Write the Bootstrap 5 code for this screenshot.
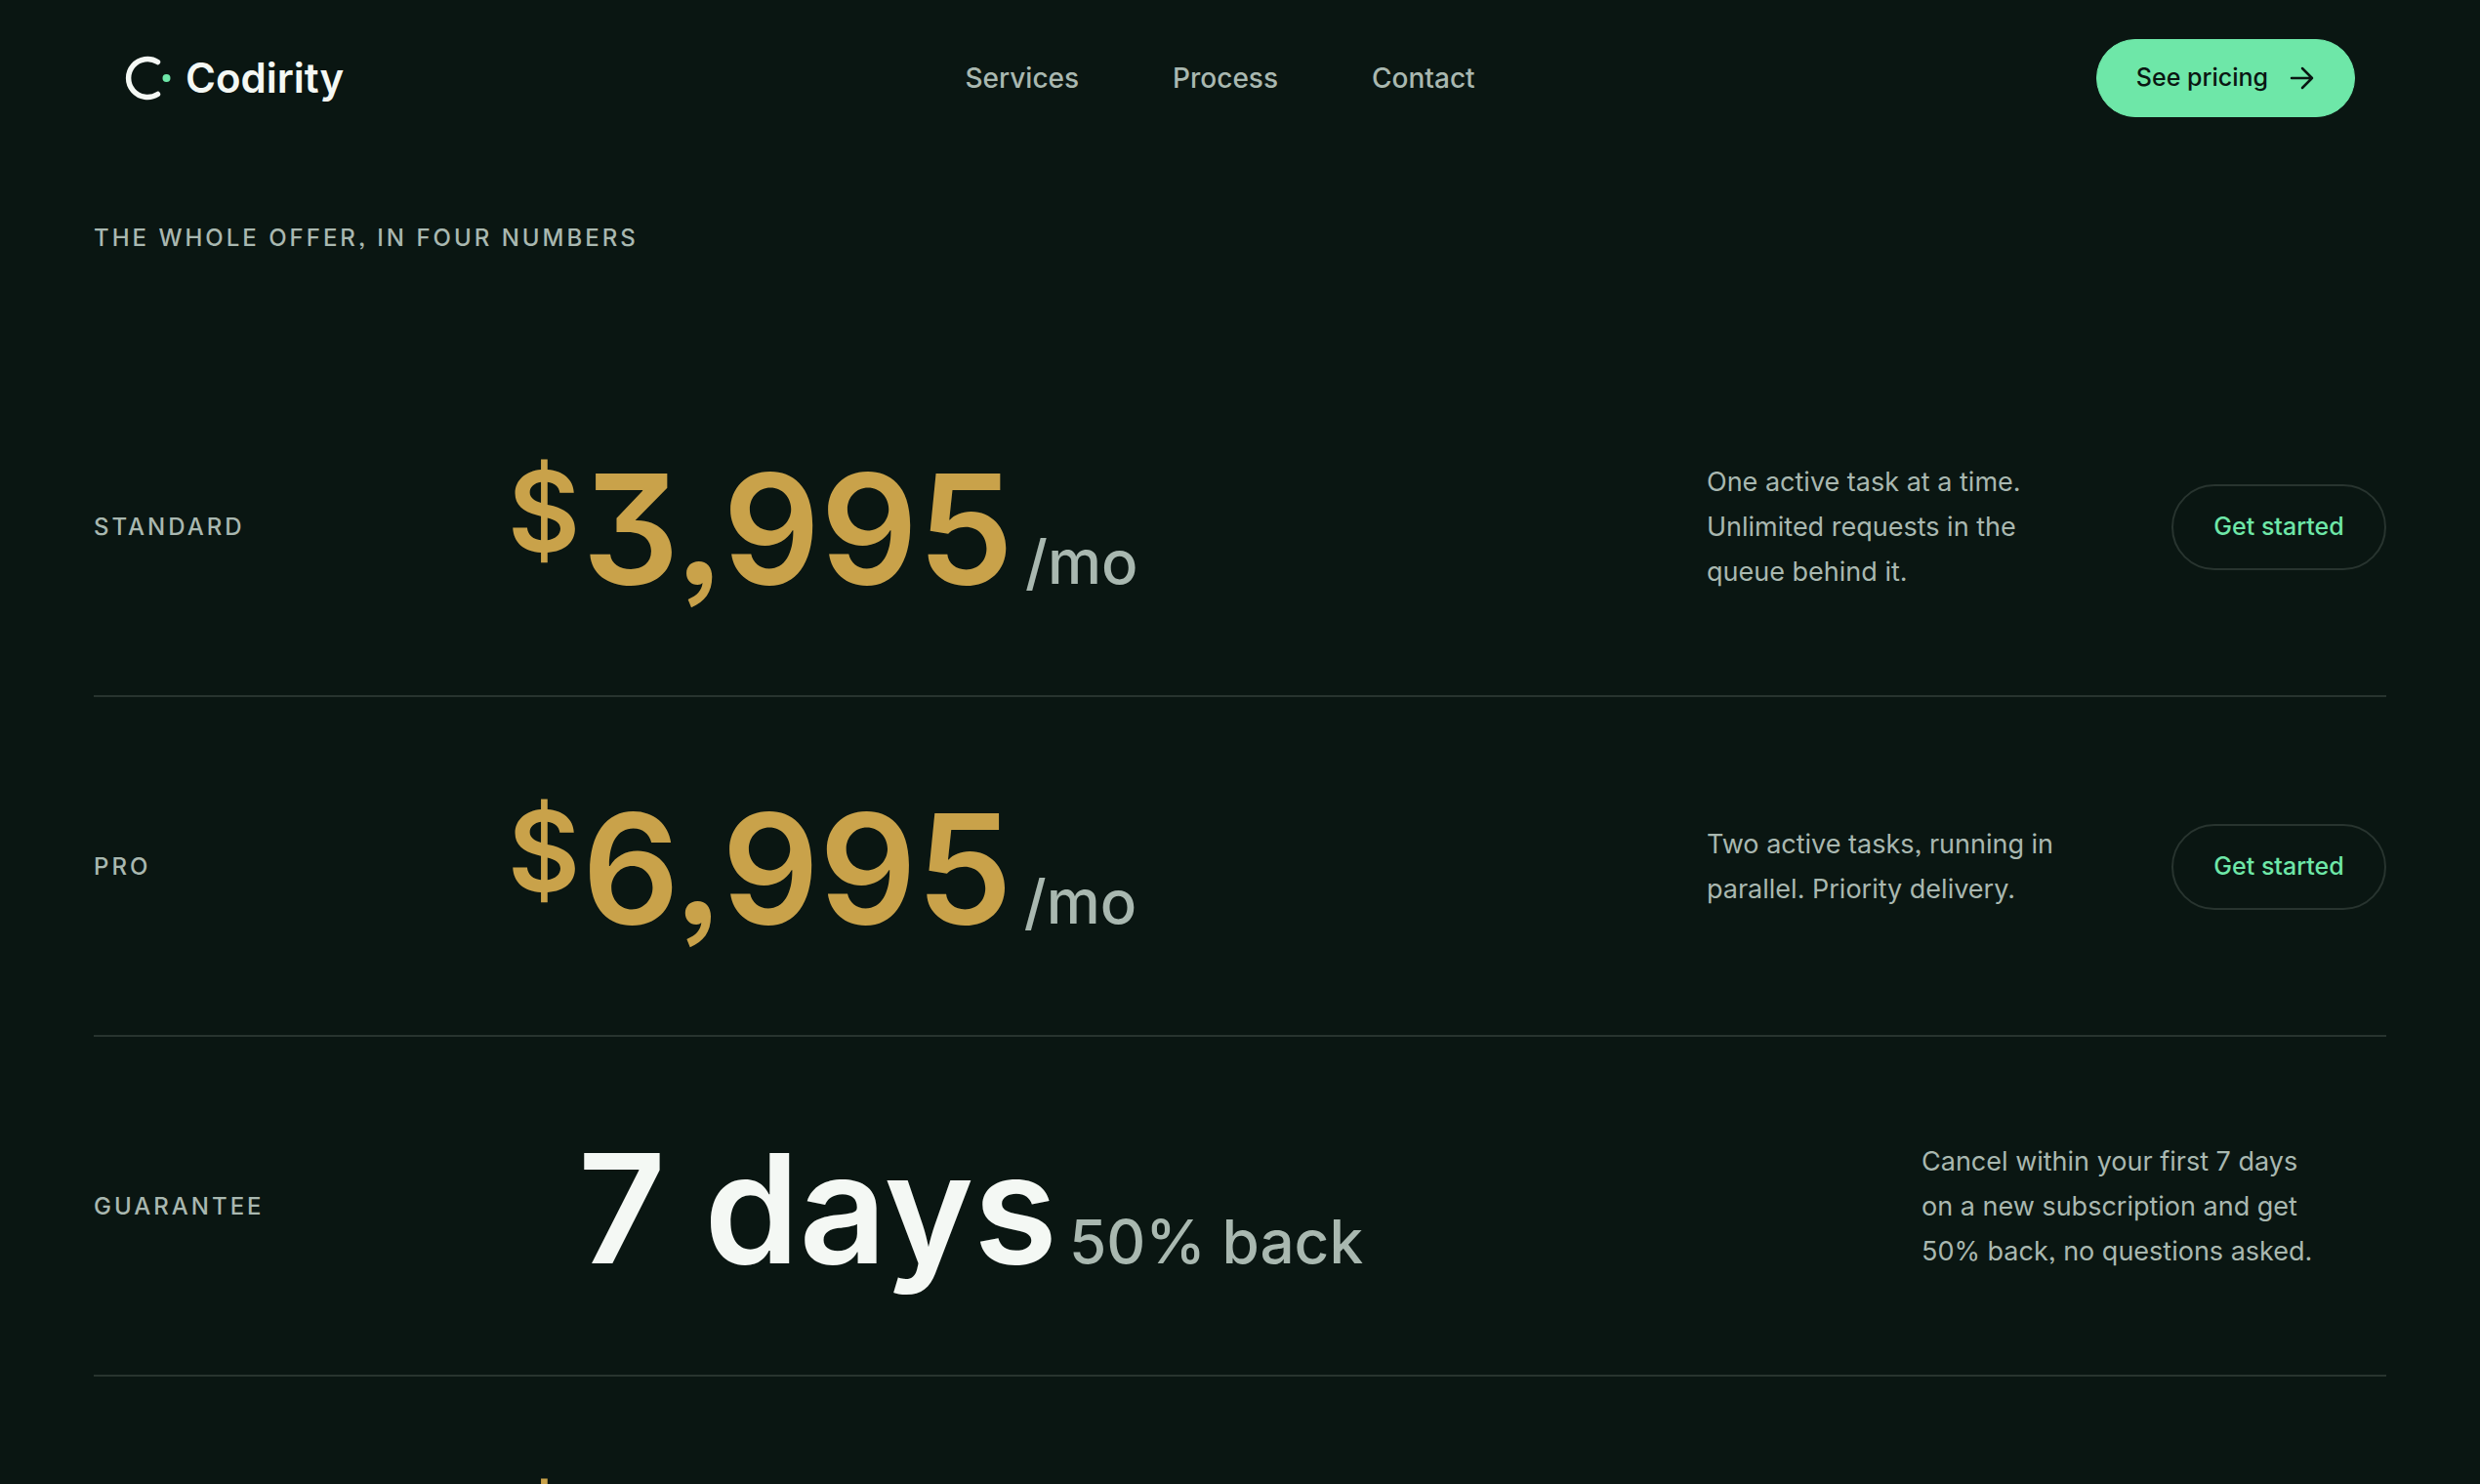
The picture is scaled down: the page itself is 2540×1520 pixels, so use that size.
<!DOCTYPE html>
<html lang="en">
<head>
<meta charset="utf-8">
<meta name="viewport" content="width=device-width, initial-scale=1">
<title>Codirity</title>
<link href="https://cdn.jsdelivr.net/npm/bootstrap@5.3.0/dist/css/bootstrap.min.css" rel="stylesheet">
<style>
:root{--ink:#0a1612;--soft:#a9b8b0;--mint:#6ee7a8;--gold:#c9a24a;--paper:#f4f8f4;--rule:#28342f}
body{background:var(--ink);color:var(--soft);font-family:Inter,"Liberation Sans",sans-serif;font-size:27px;line-height:46px;font-feature-settings:"ss03"}
.site-bar{padding:40px 128px}
.brand-link{color:var(--paper);font-size:42px;font-weight:600;line-height:48px;gap:14px}
.brand-link:hover{color:var(--paper)}
.site-links{gap:96px}
.site-links .nav-link{color:var(--soft);font-size:28px;font-weight:500;line-height:40px}
.btn-mint{--bs-btn-bg:var(--mint);--bs-btn-color:var(--ink);--bs-btn-border-color:var(--mint);--bs-btn-hover-bg:var(--paper);height:80px;padding:0 40px;gap:22px;font-size:25px;font-weight:500}
.offer{padding:0 96px}
.eyebrow{font-size:24px;font-weight:500;line-height:32px;letter-spacing:3px;text-transform:uppercase;margin:0}
.offer-title{padding:68px 0 106px}
.offer-row{height:348px;padding-top:2px;border-bottom:2px solid var(--rule)}
.offer-label{flex:0 0 424px}
.offer-label.wide{flex-basis:496px}
.figure-line{color:var(--gold);font-size:156px;font-weight:600;line-height:162px;height:166px;padding-top:4px}
.figure-line.plain{color:var(--paper)}
.currency{font-size:114px;line-height:126px;margin-right:2px}
.amount{font-feature-settings:"cv09","ss03"}
.unit{color:var(--soft);font-size:62px;font-weight:500;line-height:62px;margin-left:12px}
.offer-note{flex:0 0 364px}
.offer-note.wide{flex-basis:476px}
.offer-action{margin-left:112px}
.btn-ring{--bs-btn-color:var(--mint);--bs-btn-border-color:var(--rule);--bs-btn-border-width:2px;--bs-btn-hover-color:var(--ink);--bs-btn-hover-bg:var(--mint);width:220px;height:88px;font-size:25px;font-weight:500}
</style>
</head>
<body class="vh-100 overflow-hidden">
<header class="site-bar d-flex justify-content-between align-items-center">
  <a href="#" class="brand-link d-flex align-items-center text-decoration-none">
    <svg width="48" height="48" viewBox="0 0 48 48" fill="none" aria-hidden="true"><path d="M34.500 7.500A19.500 19.500 0 1 0 34.500 40.500" stroke="#f4f8f4" stroke-width="5.500" stroke-linecap="round" transform="translate(-1 0)"/><circle cx="42.500" cy="24" r="4" fill="#6ee7a8"/></svg>
    <span>Codirity</span>
  </a>
  <nav class="site-links d-flex" aria-label="Main">
    <a class="nav-link" href="#services">Services</a>
    <a class="nav-link" href="#process">Process</a>
    <a class="nav-link" href="#contact">Contact</a>
  </nav>
  <button type="button" class="btn btn-mint rounded-pill d-flex align-items-center">See pricing
    <svg width="26" height="26" viewBox="0 0 26 26" fill="none" stroke="currentColor" stroke-width="2.500" stroke-linecap="round" stroke-linejoin="round" aria-hidden="true"><path d="M2 13H23M13 3L23 13L13 23"/></svg>
  </button>
</header>
<main class="offer">
  <div class="offer-title"><h1 class="eyebrow">The whole offer, in four numbers</h1></div>
  <section class="offer-row d-flex align-items-center">
    <h2 class="eyebrow offer-label">Standard</h2>
    <div class="figure-line d-flex align-items-baseline flex-grow-1"><span class="currency align-self-start">$</span><span class="amount">3,995</span><span class="unit">/mo</span></div>
    <p class="offer-note mb-0">One active task at a time. Unlimited requests in the queue behind it.</p>
    <div class="offer-action"><button type="button" class="btn btn-ring rounded-pill">Get started</button></div>
  </section>
  <section class="offer-row d-flex align-items-center">
    <h2 class="eyebrow offer-label">Pro</h2>
    <div class="figure-line d-flex align-items-baseline flex-grow-1"><span class="currency align-self-start">$</span><span class="amount">6,995</span><span class="unit">/mo</span></div>
    <p class="offer-note mb-0">Two active tasks, running in parallel. Priority delivery.</p>
    <div class="offer-action"><button type="button" class="btn btn-ring rounded-pill">Get started</button></div>
  </section>
  <section class="offer-row d-flex align-items-center">
    <h2 class="eyebrow offer-label wide">Guarantee</h2>
    <div class="figure-line plain d-flex align-items-baseline flex-grow-1"><span>7 days</span><span class="unit">50% back</span></div>
    <p class="offer-note wide mb-0">Cancel within your first 7 days<br>on a new subscription and get<br>50% back, no questions asked.</p>
  </section>
  <section class="offer-row d-flex align-items-center">
    <div class="offer-label"></div>
    <div class="figure-line d-flex align-items-baseline flex-grow-1"><span class="currency align-self-start">$</span></div>
  </section>
</main>
<script src="https://cdn.jsdelivr.net/npm/bootstrap@5.3.0/dist/js/bootstrap.bundle.min.js"></script>
</body>
</html>
